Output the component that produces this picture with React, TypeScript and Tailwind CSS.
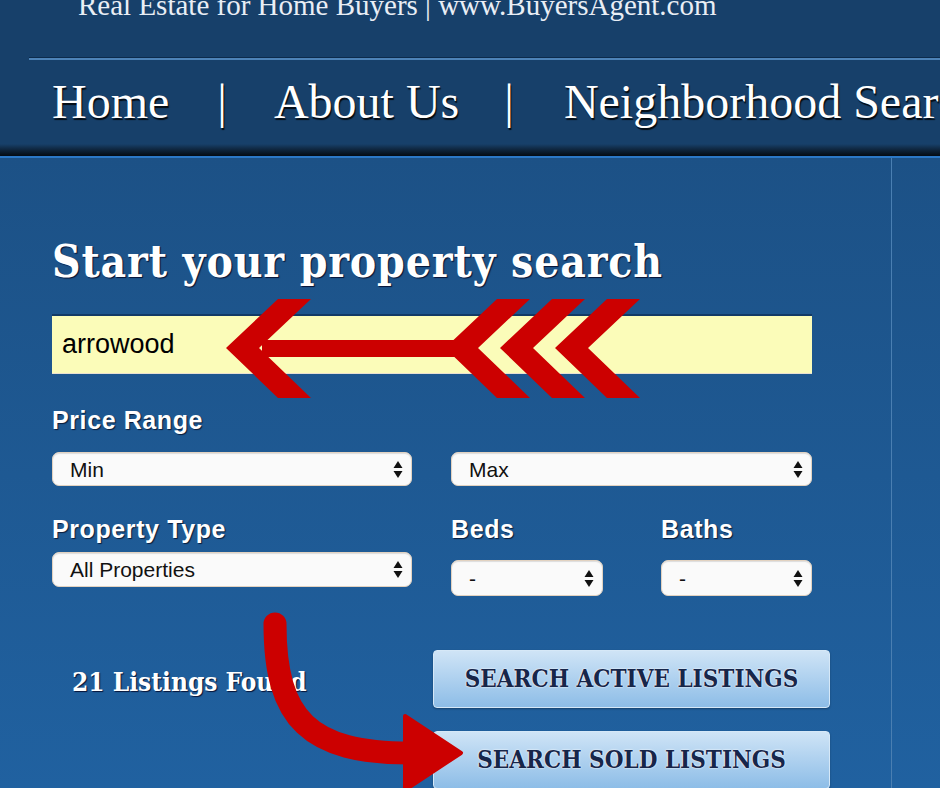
import React from "react";

function UpDown() {
  return (
    <svg width="10" height="19" viewBox="0 0 10 19" className="shrink-0">
      <polygon points="5,1 9.5,8 0.5,8" fill="#111" />
      <polygon points="0.5,11 9.5,11 5,18" fill="#111" />
    </svg>
  );
}

function Sel({ text, className }: { text: string; className: string }) {
  return (
    <div
      className={
        "flex items-center justify-between rounded-[7px] bg-[#fafafa] border border-[#e2d2c0] shadow-[inset_0_1px_1px_rgba(0,0,0,0.12)] pl-[17px] pr-[8px] text-[21px] leading-none text-[#111] font-['Liberation_Sans',Arial,sans-serif] " +
        className
      }
    >
      <span>{text}</span>
      <UpDown />
    </div>
  );
}

const label =
  "text-[25px] leading-[24px] tracking-[0.6px] font-bold text-white font-['Liberation_Sans',Arial,sans-serif] [text-shadow:1px_1px_1px_rgba(0,0,20,0.7)]";

const btn =
  "flex items-center justify-center w-[397px] h-[58px] rounded-[4px] border border-[#d6e8f7] bg-gradient-to-b from-[#cfe4f6] to-[#8dbde7] text-[#17264a] text-[24px] font-bold font-['DejaVu_Serif',serif] [font-stretch:condensed] [text-shadow:0_0_2px_#fff,0_0_1px_#fff] shadow-[0_1px_2px_rgba(0,0,0,0.3)]";

export default function App() {
  return (
    <div className="relative w-[940px] h-[788px] overflow-hidden bg-[#1d5890]">
      <header className="relative flex flex-col h-[158px] bg-[#17406a] overflow-hidden">
        <div className="pl-[78px] -mt-[9px] text-[29px] leading-[29px] text-[#e9eef5] font-['Liberation_Serif',serif] whitespace-nowrap">
          Real Estate for Home Buyers | www.BuyersAgent.com
        </div>
        <div className="ml-[29px] mt-[37px] h-[3px] border-t border-[#0c2b4c] bg-[#4d83b8]" />
        <nav className="flex mt-[18px] pl-[52px] text-[48px] leading-[48px] text-white font-['Liberation_Serif',serif] whitespace-nowrap [text-shadow:1px_2px_1px_rgba(0,0,0,0.85)]">
          <span>Home</span>
          <span className="ml-[48px]">|</span>
          <span className="ml-[47px]">About Us</span>
          <span className="ml-[45px]">|</span>
          <span className="ml-[50px]">Neighborhood Search</span>
        </nav>
        <div className="mt-auto h-[12px] bg-gradient-to-b from-[#17406a] to-[#050b12]" />
        <div className="h-[2px] bg-[#2b78c6]" />
      </header>

      <main className="flex h-[630px] bg-gradient-to-b from-[#1c5186] to-[#2061a0]">
        <div className="w-[892px] shrink-0 border-r border-[#4a7fb2] pl-[52px]">
          <h1 className="mt-[82px] text-[44px] leading-[44px] tracking-[0.85px] font-bold text-white font-['DejaVu_Serif',serif] [font-stretch:condensed] whitespace-nowrap [text-shadow:1px_1px_1px_rgba(0,0,30,0.8)]">
            Start your property search
          </h1>
          <div className="mt-[30px] w-[760px] h-[60px] flex items-center pl-[10px] bg-[#fbfcb9] border-t-2 border-[#123a66] border-b border-b-[#e8e0d0] text-[27px] text-black font-['Liberation_Sans',Arial,sans-serif]">
            arrowood
          </div>

          <div className={"mt-[34px] " + label}>Price Range</div>
          <div className="mt-[20px] flex gap-[39px]">
            <Sel text="Min" className="w-[360px] h-[34px]" />
            <Sel text="Max" className="w-[361px] h-[34px]" />
          </div>

          <div className="mt-[31px] flex">
            <div className="w-[399px]">
              <div className={label}>Property Type</div>
              <Sel text="All Properties" className="mt-[11px] w-[360px] h-[35px]" />
            </div>
            <div className="w-[210px]">
              <div className={label}>Beds</div>
              <Sel text="-" className="mt-[19px] w-[152px] h-[36px]" />
            </div>
            <div>
              <div className={label}>Baths</div>
              <Sel text="-" className="mt-[19px] w-[151px] h-[36px]" />
            </div>
          </div>

          <div className="mt-[54px] flex">
            <div className="w-[381px] pl-[20px] pt-[18px] text-[26px] leading-[28px] font-bold text-white font-['DejaVu_Serif',serif] [font-stretch:condensed] whitespace-nowrap [text-shadow:1px_1px_1px_rgba(0,0,30,0.8)]">
              21 Listings Found
            </div>
            <div className="flex flex-col gap-[23px]">
              <div className={btn}>SEARCH ACTIVE LISTINGS</div>
              <div className={btn}>SEARCH SOLD LISTINGS</div>
            </div>
          </div>
        </div>
        <div className="flex-1" />
      </main>

      <svg
        className="absolute inset-0 pointer-events-none"
        width="940"
        height="788"
        viewBox="0 0 940 788"
      >
        <g fill="#cc0000">
          <polygon points="226,348 278,299 311,299 259,348 311,398 278,398" />
          <rect x="262" y="340" width="195" height="17" />
          <polygon points="445,348 497,299 530,299 478,348 530,398 497,398" />
          <polygon points="500,348 552,299 585,299 533,348 585,398 552,398" />
          <polygon points="555,348 607,299 640,299 588,348 640,398 607,398" />
        </g>
        <path
          d="M275 624 C 275 720 310 753 410 753"
          fill="none"
          stroke="#cc0000"
          strokeWidth="23"
          strokeLinecap="round"
        />
        <polygon
          points="405,716 461,753 405,790"
          fill="#cc0000"
          stroke="#cc0000"
          strokeWidth="4"
          strokeLinejoin="round"
        />
      </svg>
    </div>
  );
}
